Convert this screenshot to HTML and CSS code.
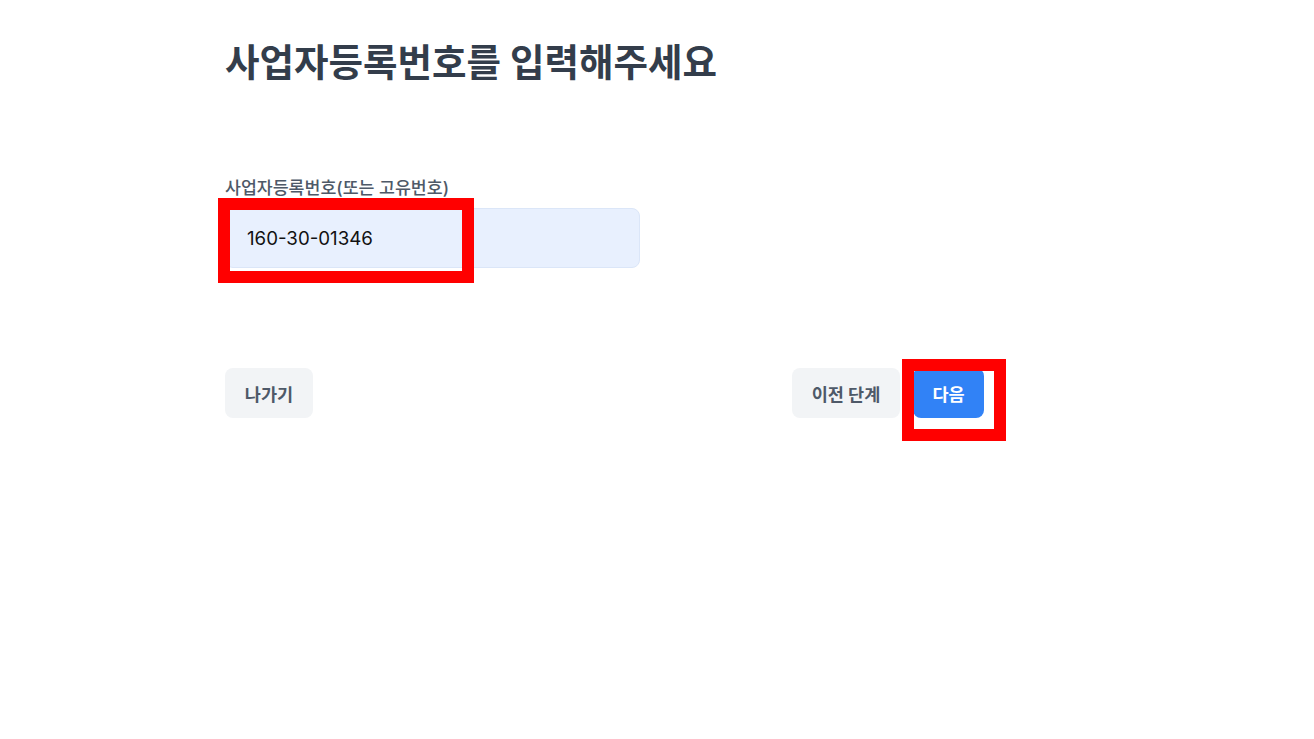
FILE: index.html
```html
<!DOCTYPE html>
<html lang="ko">
<head>
<meta charset="utf-8">
<link rel="stylesheet" href="styles.css">
</head>
<body>
<main class="page">
  <h1 class="title">사업자등록번호를 입력해주세요</h1>
  <div class="field">
    <label class="label" for="biz">사업자등록번호(또는 고유번호)</label>
    <div class="input-wrap">
      <input id="biz" class="input" type="text" value="160-30-01346">
      <div class="mark mark-input"></div>
    </div>
  </div>
  <div class="actions">
    <button class="btn btn-gray btn-exit">나가기</button>
    <div class="right">
      <button class="btn btn-gray btn-prev">이전 단계</button>
      <div class="next-wrap">
        <button class="btn btn-blue btn-next">다음</button>
        <div class="mark mark-next"></div>
      </div>
    </div>
  </div>
</main>
</body>
</html>
```

FILE: styles.css
```css
* { box-sizing: border-box; }
html, body {
  margin: 0;
  padding: 0;
  min-height: 100%;
  background: #fff;
  font-family: "Inter", "Noto Sans CJK KR", "Noto Sans", sans-serif;
}
html { height: 100%; }
.page {
  width: 759px;
  margin-left: 225px;
  padding-top: 36px;
  padding-bottom: 300px;
}
.title {
  margin: 0;
  font-size: 37.5px;
  line-height: 54px;
  font-weight: 700;
  color: #333d4b;
}
.field {
  margin-top: 86px;
  display: flex;
  flex-direction: column;
}
.label {
  font-size: 17.3px;
  line-height: 24px;
  color: #4e5968;
  font-weight: 500;
  margin-bottom: 8px;
}
.input-wrap {
  position: relative;
  width: 415px;
}
.input {
  display: block;
  width: 415px;
  height: 60px;
  border: 1px solid #dbe6f8;
  border-radius: 8px;
  background: #e8f0fe;
  padding: 0 21px;
  font-family: inherit;
  font-size: 18.7px;
  color: #111;
  outline: none;
}
.mark {
  position: absolute;
  display: block;
  border: 12px solid #ff0000;
  pointer-events: none;
}
.mark-input {
  left: -7px;
  top: -10px;
  width: 256px;
  height: 85px;
}
.actions {
  margin-top: 100px;
  display: flex;
  justify-content: space-between;
  align-items: center;
}
.right {
  display: flex;
  align-items: flex-start;
  gap: 13px;
}
.next-wrap {
  position: relative;
  height: 50px;
}
.btn {
  display: block;
  height: 50px;
  padding: 0;
  border: 0;
  border-radius: 8px;
  font-family: inherit;
  font-size: 17.5px;
  font-weight: 700;
  cursor: pointer;
}
.btn-exit { width: 88px; }
.btn-prev { width: 108px; }
.btn-next { width: 71px; }
.btn-gray {
  background: #f2f4f6;
  color: #4e5968;
}
.btn-blue {
  background: #3182f6;
  color: #fff;
}
.mark-next {
  left: -11px;
  top: -9px;
  width: 104px;
  height: 82px;
}
```
